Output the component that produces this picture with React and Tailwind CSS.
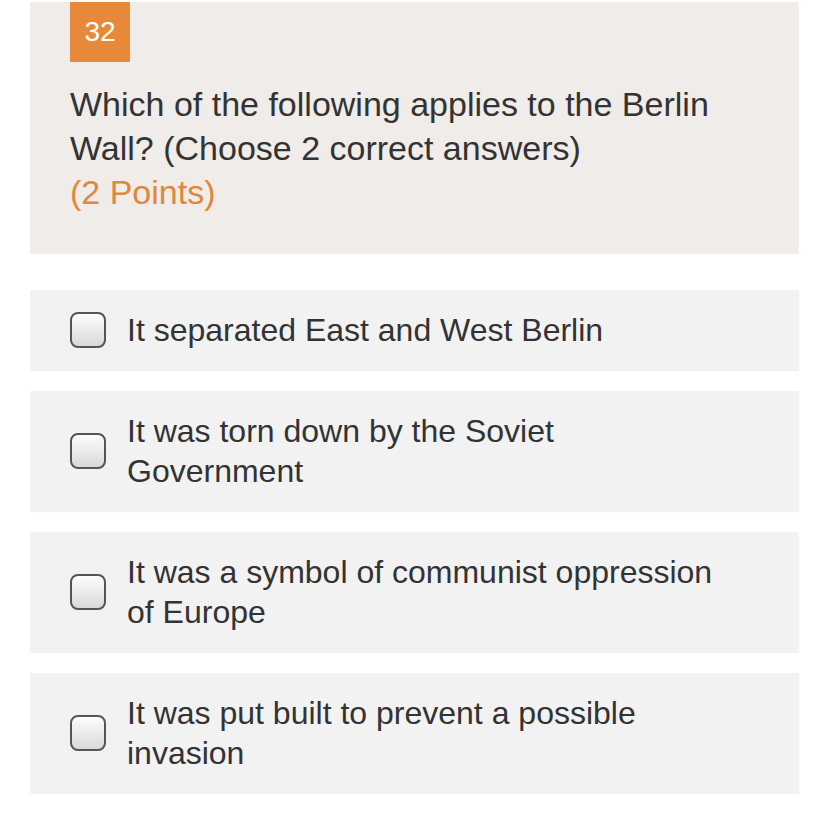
import React from "react";

const options = [
  "It separated East and West Berlin",
  "It was torn down by the Soviet Government",
  "It was a symbol of communist oppression of Europe",
  "It was put built to prevent a possible invasion",
];

function Checkbox() {
  return (
    <div className="w-[36px] h-[36px] shrink-0 rounded-[8px] border-2 border-[#555] bg-gradient-to-b from-[#fdfdfd] to-[#d9d9d9]" />
  );
}

export default function App() {
  return (
    <div
      className="w-[828px] h-[828px] bg-white overflow-hidden"
      style={{ fontFamily: '"Liberation Sans", Arial, sans-serif' }}
    >
      <div className="ml-[30px] w-[768px] mt-[2px] bg-[#f0ece9] shadow-[1px_1px_1px_rgba(0,0,0,0.06)] px-[40px] pb-[39px]">
        <div className="w-[60px] h-[60px] bg-[#e8893a] text-white text-[28px] flex items-center justify-center">
          32
        </div>
        <div className="mt-[20px] text-[34px] leading-[44px] text-[#333]">
          Which of the following applies to the Berlin Wall? (Choose 2 correct answers)
          <div className="text-[#e0883a]">(2 Points)</div>
        </div>
      </div>
      <div className="ml-[30px] w-[768px] mt-[37px] flex flex-col gap-[21px]">
        {options.map((o, i) => (
          <div
            key={i}
            className="bg-[#f2f2f2] shadow-[1px_1px_1px_rgba(0,0,0,0.05)] flex items-center py-[20px] pl-[40px] pr-[68px]"
          >
            <Checkbox />
            <div className="ml-[21px] text-[32px] leading-[40px] text-[#333]">{o}</div>
          </div>
        ))}
      </div>
    </div>
  );
}
